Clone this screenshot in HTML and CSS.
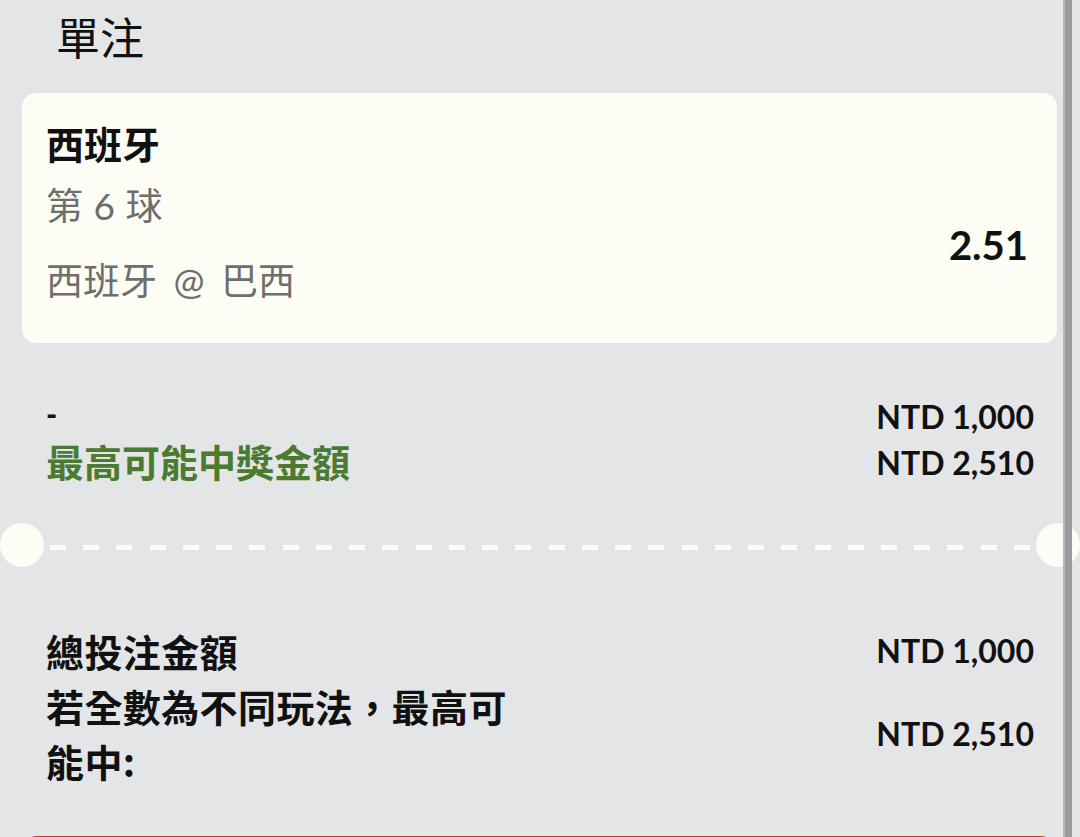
FILE: index.html
```html
<!DOCTYPE html>
<html lang="zh-Hant">
<head>
<meta charset="utf-8">
<title>單注</title>
<link rel="stylesheet" href="styles.css">
</head>
<body>
<div class="page">
  <h1 class="title">單注</h1>

  <div class="card">
    <div class="card-info">
      <div class="team">西班牙</div>
      <div class="market">第 6 球</div>
      <div class="match">西班牙 @ 巴西</div>
    </div>
    <div class="odds">2.51</div>
  </div>

  <div class="summary">
    <div class="row">
      <span class="dash-label">-</span>
      <span class="amount">NTD 1,000</span>
    </div>
    <div class="row">
      <span class="win-label">最高可能中獎金額</span>
      <span class="amount">NTD 2,510</span>
    </div>
  </div>

  <div class="divider">
    <span class="notch"></span>
    <span class="dashes"></span>
    <span class="notch"></span>
  </div>

  <div class="totals">
    <div class="total-row">
      <span class="total-label">總投注金額</span>
      <span class="amount">NTD 1,000</span>
    </div>
    <div class="total-row">
      <span class="total-label wrap">若全數為不同玩法，最高可能中:</span>
      <span class="amount">NTD 2,510</span>
    </div>
  </div>

  <div class="place-btn"></div>
</div>
<div class="scrollbar"></div>
</body>
</html>
```

FILE: styles.css
```css
html, body {
  margin: 0;
  padding: 0;
}

body {
  width: 1080px;
  height: 837px;
  overflow: hidden;
  position: relative;
  background: #e4e5e7;
  font-family: Lato, "Noto Sans CJK TC", sans-serif;
  color: #111;
}

.page {
  display: flex;
  flex-direction: column;
}

.title {
  margin: 0;
  height: 93px;
  box-sizing: border-box;
  padding: 14px 0 0 56px;
  font-family: "Noto Sans CJK TC", sans-serif;
  font-size: 44px;
  line-height: 44px;
  font-weight: 400;
  color: #111;
}

.card {
  margin: 0 23px 0 22px;
  height: 250px;
  box-sizing: border-box;
  padding: 32px 29px 0 24px;
  background: #fdfdf5;
  border-radius: 14px;
  display: flex;
  justify-content: space-between;
  align-items: flex-start;
}

.card-info {
  display: flex;
  flex-direction: column;
  font-size: 37px;
  line-height: 36px;
}

.team {
  font-family: "Noto Sans CJK TC", sans-serif;
  font-size: 38px;
  font-weight: 700;
  color: #111;
}

.market {
  margin-top: 27px;
  color: #6e6e6b;
  word-spacing: 1px;
}

.match {
  margin-top: 39px;
  color: #6e6e6b;
  word-spacing: 7px;
}

.odds {
  margin-top: 100px;
  font-size: 40px;
  line-height: 40px;
  font-weight: 700;
  color: #111;
}

.summary {
  margin-top: 50px;
  padding: 0 46px;
  display: flex;
  flex-direction: column;
}

.row {
  height: 46px;
  display: flex;
  justify-content: space-between;
  align-items: center;
}

.dash-label {
  font-size: 30px;
  line-height: 30px;
  font-weight: 900;
  margin-bottom: 4px;
}

.win-label {
  font-family: "Noto Sans CJK TC", sans-serif;
  font-size: 38px;
  line-height: 40px;
  font-weight: 700;
  color: #4b7b30;
  margin-top: -3px;
}

.amount {
  font-family: Lato, sans-serif;
  font-size: 32px;
  font-weight: 700;
  color: #111;
  white-space: nowrap;
}

.divider {
  margin-top: 38px;
  height: 44px;
  display: flex;
  align-items: center;
}

.notch {
  width: 44px;
  height: 44px;
  border-radius: 50%;
  background: #fdfdf5;
  flex: none;
}

.notch:last-child {
  margin-left: 6px;
}

.dashes {
  flex: none;
  width: 980px;
  margin-left: 6px;
  height: 5px;
  margin-top: 4px;
  background: repeating-linear-gradient(to right, #fdfdf5 0 16px, transparent 16px 33.24px);
}

.totals {
  margin-top: 56px;
  padding: 0 46px;
  display: flex;
  flex-direction: column;
}

.total-row {
  display: flex;
  justify-content: space-between;
  align-items: center;
}

.total-label {
  font-family: "Noto Sans CJK TC", sans-serif;
  font-size: 38px;
  line-height: 55px;
  font-weight: 700;
  color: #111;
  letter-spacing: 0.4px;
}

.total-label.wrap {
  width: 475px;
}

.place-btn {
  margin: 48px 25px 0 23px;
  height: 40px;
  background: #b3392c;
  border-radius: 14px;
}

.scrollbar {
  position: absolute;
  top: 0;
  bottom: 0;
  left: 1063px;
  width: 9px;
  background: linear-gradient(to right, #b9b9bb 0 2px, #9a9a9c 2px);
}
```
